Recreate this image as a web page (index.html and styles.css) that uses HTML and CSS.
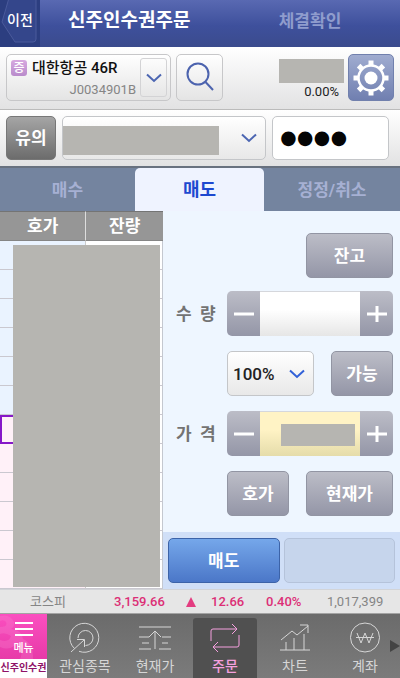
FILE: index.html
```
<!DOCTYPE html>
<html lang="ko">
<head>
<meta charset="utf-8">
<meta name="viewport" content="width=device-width, initial-scale=1">
<title>신주인수권주문</title>
<link rel="stylesheet" href="styles.css">
</head>
<body>
<div class="app">
  <header class="topbar">
    <a class="back" href="#">
      <svg class="back-shape" viewBox="0 0 40 47" preserveAspectRatio="none" aria-hidden="true"><path d="M0 0H40V47H0Z" fill="#2c3e80"/><path d="M9 -2H36V39Q36 42 33 42H15L2 22Z" fill="#34468b" stroke="#4a5a9b"/></svg>
      <span>이전</span>
    </a>
    <h1>신주인수권주문</h1>
    <a class="confirm" href="#">체결확인</a>
  </header>

  <section class="strip stock-strip">
    <button class="stock" type="button">
      <span class="stock-text">
        <span class="stock-name"><span class="tag">증</span>대한항공 46R</span>
        <span class="stock-code">J0034901B</span>
      </span>
      <span class="stock-arrow"><svg class="chevron" viewBox="0 0 16 10" aria-hidden="true"><path d="M1 1.5 8 8 15 1.5"/></svg></span>
    </button>
    <button class="search" type="button" aria-label="검색">
      <svg viewBox="0 0 32 32" aria-hidden="true"><circle cx="14" cy="12" r="10.5"/><path d="M21.5 20 29 28"/></svg>
    </button>
    <div class="price"><span class="mask price-mask"></span><span class="rate">0.00%</span></div>
    <button class="settings" type="button" aria-label="설정">
      <svg viewBox="-18 -18 36 36" aria-hidden="true">
        <g fill="#fff"><path id="tooth" d="M-2.5 -17.5H2.5V-12H-2.5Z"/><use href="#tooth" transform="rotate(45)"/><use href="#tooth" transform="rotate(90)"/><use href="#tooth" transform="rotate(135)"/><use href="#tooth" transform="rotate(180)"/><use href="#tooth" transform="rotate(225)"/><use href="#tooth" transform="rotate(270)"/><use href="#tooth" transform="rotate(315)"/></g>
        <circle r="12.5" fill="none" stroke="#fff" stroke-width="2.5"/><circle r="6.5" fill="#fff"/>
      </svg>
    </button>
  </section>

  <section class="strip account-strip">
    <button class="notice" type="button">유의</button>
    <div class="select-box account">
      <select aria-label="계좌번호"><option></option></select>
      <span class="mask account-mask"></span>
      <svg class="chevron" viewBox="0 0 16 10" aria-hidden="true"><path d="M1 1.5 8 8 15 1.5"/></svg>
    </div>
    <input class="password" type="password" value="0000" aria-label="비밀번호">
  </section>

  <nav class="tabs">
    <a href="#">매수</a>
    <a class="on" href="#">매도</a>
    <a href="#">정정/취소</a>
  </nav>

  <main class="body">
    <div class="book">
      <table>
        <thead><tr><th>호가</th><th>잔량</th></tr></thead>
        <tbody>
          <tr class="ask"><td></td><td></td></tr>
          <tr class="ask"><td></td><td></td></tr>
          <tr class="ask"><td></td><td></td></tr>
          <tr class="ask"><td></td><td></td></tr>
          <tr class="ask"><td></td><td></td></tr>
          <tr class="ask"><td></td><td></td></tr>
          <tr class="bid now"><td></td><td></td></tr>
          <tr class="bid"><td></td><td></td></tr>
          <tr class="bid"><td></td><td></td></tr>
          <tr class="bid"><td></td><td></td></tr>
          <tr class="bid"><td></td><td></td></tr>
          <tr class="bid"><td></td><td></td></tr>
        </tbody>
      </table>
      <span class="mask book-mask"></span>
    </div>

    <form class="order">
      <div class="fields">
        <div class="balance"><button class="btn wide" type="button">잔고</button></div>
        <div class="field">
          <label for="qty">수&nbsp; 량</label>
          <div class="stepper">
            <button type="button" aria-label="수량 감소"><svg viewBox="0 0 20 20" aria-hidden="true"><path d="M0 10H20"/></svg></button>
            <input id="qty" type="text">
            <button type="button" aria-label="수량 증가"><svg viewBox="0 0 20 20" aria-hidden="true"><path d="M0 10H20M10 2V18"/></svg></button>
          </div>
        </div>
        <div class="field">
          <span></span>
          <div class="pair">
            <div class="select-box percent">
              <select aria-label="비율"><option>100%</option></select>
              <svg class="chevron" viewBox="0 0 16 10" aria-hidden="true"><path d="M1 1.5 8 8 15 1.5"/></svg>
            </div>
            <button class="btn narrow" type="button">가능</button>
          </div>
        </div>
        <div class="field">
          <label for="price">가&nbsp; 격</label>
          <div class="stepper yellow">
            <button type="button" aria-label="가격 감소"><svg viewBox="0 0 20 20" aria-hidden="true"><path d="M0 10H20"/></svg></button>
            <input id="price" type="text">
            <span class="mask input-mask"></span>
            <button type="button" aria-label="가격 증가"><svg viewBox="0 0 20 20" aria-hidden="true"><path d="M0 10H20M10 2V18"/></svg></button>
          </div>
        </div>
        <div class="field">
          <span></span>
          <div class="pair">
            <button class="btn narrow" type="button">호가</button>
            <button class="btn wide" type="button">현재가</button>
          </div>
        </div>
      </div>
      <div class="actions">
        <button class="submit" type="submit">매도</button>
        <button class="blank" type="button" disabled aria-label="사용 안 함"></button>
      </div>
    </form>
  </main>

  <section class="ticker">
    <span class="dim">코스피</span>
    <span>3,159.66</span>
    <svg viewBox="0 0 10 10" aria-hidden="true"><path d="M5 0 10 10H0Z"/></svg>
    <span>12.66</span>
    <span>0.40%</span>
    <span class="dim volume">1,017,399</span>
  </section>

  <nav class="dock">
    <a class="menu" href="#">
      <span class="menu-top">
        <svg class="swirl" viewBox="0 0 47 45" preserveAspectRatio="none" aria-hidden="true"><path d="M0 2Q8 0 12 5Q17 11 11 15Q22 16 23 25Q34 29 33 45H20Q25 34 15 31Q9 37 0 33V26Q9 29 11 22Q5 18 0 20V13Q8 13 6 8Q4 5 0 7Z"/></svg>
        <svg class="bars" viewBox="0 0 18 14" aria-hidden="true"><path d="M0 1H18M0 7H18M0 13H18"/></svg>
        <span>메뉴</span>
      </span>
      <span class="menu-bottom">신주인수권</span>
    </a>
    <a class="item" href="#">
      <svg viewBox="0 0 34 32" aria-hidden="true"><path d="M6.5 26.5A14.5 14.5 0 1 1 11 29.3M10 16A7.5 7.5 0 1 1 17.5 23.5M3 30 16 18M9 17.5H16.5V25"/></svg>
      <span>관심종목</span>
    </a>
    <a class="item" href="#">
      <svg viewBox="0 0 34 32" aria-hidden="true"><path d="M1 5H33M1 15H11M24 15H33M4 21H11M24 21H30M1 27H13M21 27H33M17 27V9M11 15 17 9 23 15"/></svg>
      <span>현재가</span>
    </a>
    <a class="item on" href="#">
      <svg viewBox="0 0 34 32" aria-hidden="true"><path d="M3 19V9Q3 7 5 7H29M24 2 29 7 24 12M31 13V23Q31 25 29 25H5M10 20 5 25 10 30"/></svg>
      <span>주문</span>
    </a>
    <a class="item" href="#">
      <svg viewBox="0 0 34 32" aria-hidden="true"><path d="M2 28H32M8 28V20M16 28V16M26 28V12M3 18 14 9 19 13 30 4M22 3H30V11"/></svg>
      <span>차트</span>
    </a>
    <a class="item" href="#">
      <svg viewBox="0 0 34 32" aria-hidden="true"><circle cx="17" cy="15.5" r="14.5"/><path d="M9 11 13 21 17 11 21 21 25 11M8 15.5H26"/></svg>
      <span>계좌</span>
    </a>
    <span class="more"></span>
  </nav>
</div>
</body>
</html>
```
FILE: styles.css
```
* { box-sizing: border-box; }

body {
  margin: 0;
  font-family: Roboto, "Noto Sans CJK KR", sans-serif;
  font-size: 17px;
  line-height: 20px;
  color: #222;
  background: #eef6ff;
}

button, input, select {
  font: inherit;
  color: inherit;
  margin: 0;
  padding: 0;
  border: 0;
  min-width: 0;
}

a { color: inherit; text-decoration: none; }

.app { display: flex; flex-direction: column; min-height: 100vh; }

.mask { display: block; background: #b6b5b1; }

.chevron {
  width: 16px;
  height: 10px;
  fill: none;
  stroke: #4c66b2;
  stroke-width: 2;
}

/* Title bar */
.topbar {
  display: grid;
  grid-template-columns: 40px 4fr 5fr;
  align-items: center;
  height: 47px;
  padding-bottom: 6px;
  color: #fff;
  background: linear-gradient(#5969b2, #3e509c 55%, #3b4b8d);
}

.back {
  position: relative;
  display: flex;
  align-items: center;
  justify-content: center;
  height: 47px;
  padding-bottom: 8px;
  font-size: 14px;
  font-weight: 500;
  margin-bottom: -6px;
}

.back-shape { position: absolute; inset: 0; width: 100%; height: 100%; }
.back span { position: relative; }

.topbar h1 {
  margin: 0;
  padding-left: 28px;
  font-size: 19px;
  font-weight: 700;
  white-space: nowrap;
}

.confirm {
  justify-self: center;
  padding-left: 20px;
  font-weight: 700;
  color: #8f9ccd;
}

/* Control strips */
.strip {
  display: flex;
  background: linear-gradient(#fff, #e2e2e3);
}

.stock-strip {
  gap: 5px;
  height: 63px;
  padding: 7px 6px 8px;
  border-bottom: 1px solid #bbb;
}

.stock, .search {
  border: 1px solid #c7c7c9;
  border-radius: 5px;
  background: linear-gradient(#fff, #e4e4e4);
}

.stock {
  display: flex;
  flex: 0 1 165px;
  padding: 3px;
  text-align: left;
}

.stock-text { display: flex; flex: 1; flex-direction: column; gap: 2px; }

.stock-name {
  display: flex;
  align-items: center;
  gap: 5px;
  font-size: 15px;
  font-weight: 500;
  color: #111;
  padding-left: 1px;
  white-space: nowrap;
}

.tag {
  width: 16px;
  height: 16px;
  border-radius: 3px;
  font-size: 12px;
  line-height: 16px;
  text-align: center;
  color: #fff;
  background: linear-gradient(#d7a9e0, #b98bcb);
}

.stock-code {
  padding-right: 4px;
  text-align: right;
  font-size: 13px;
  color: #858585;
}

.stock-arrow {
  display: flex;
  align-items: center;
  justify-content: center;
  width: 27px;
  border: 1px solid #d3d3d5;
  border-radius: 3px;
}

.search { width: 47px; }
.search svg { display: block; width: 32px; height: 32px; margin: 0 auto; fill: none; stroke: #4c63ae; stroke-width: 2; }

.price {
  display: flex;
  flex: 1;
  flex-direction: column;
  align-items: flex-end;
  padding-top: 5px;
}
.price-mask { width: 65px; height: 24px; margin-right: -1px; }
.rate { padding-right: 4px; font-size: 13px; line-height: 18px; }

.settings {
  width: 46px;
  border: 1px solid #7180ad;
  border-radius: 5px;
  background: linear-gradient(#a0acd0, #707fb0);
}
.settings svg { display: block; width: 36px; height: 36px; margin: 0 auto; }

.account-strip {
  gap: 6px;
  height: 58px;
  padding: 6px 11px 6px 6px;
  border-bottom: 2px solid #68717f;
}

.notice {
  width: 50px;
  border: 1px solid #777;
  border-radius: 5px;
  font-weight: 700;
  color: #fff;
  background: linear-gradient(#a5a5a5, #6c6c6c);
}

.select-box {
  position: relative;
  display: flex;
  align-items: center;
  border: 1px solid #c4c6c9;
  border-radius: 5px;
  background: linear-gradient(#fff, #e8e8e8);
}

.select-box select {
  width: 100%;
  height: 100%;
  appearance: none;
  background: transparent;
}

.select-box .chevron { position: absolute; right: 8px; pointer-events: none; }

.account { flex: 1; }
.account-mask { position: absolute; left: 0; right: 46px; top: 9px; bottom: 4px; pointer-events: none; }

/* The stroke thickens the bullets */
.password {
  width: 117px;
  padding-left: 7px;
  border: 1px solid #c4c6c9;
  border-radius: 5px;
  font-family: "Liberation Serif", serif;
  font-size: 48px;
  line-height: 42px;
  color: #050505;
  background: #fff;
  -webkit-text-stroke: 3px #050505;
}

/* Order type tabs */
.tabs {
  display: grid;
  grid-template-columns: 135fr 129fr 136fr;
  height: 43px;
  background: #74849f;
}

.tabs a {
  display: flex;
  align-items: center;
  justify-content: center;
  font-size: 17px;
  font-weight: 700;
  color: #a6b0d3;
}

.tabs .on {
  font-size: 18px;
  font-weight: 700;
  color: #1d48d0;
  background: #eff3ff;
  border-radius: 5px 5px 0 0;
}

/* Quote table */
.body { display: flex; flex: 1; }

.book {
  position: relative;
  flex: 163;
  background: #fff;
}

.book table { width: 100%; border-collapse: separate; border-spacing: 0; table-layout: fixed; }

.book th {
  height: 30px;
  padding: 0;
  border-top: 1px solid #747474;
  border-bottom: 1px solid #858585;
  font-weight: 700;
  color: #fff;
  background: #969696;
}
.book th:first-child { width: 53%; border-right: 1px solid #ddd; }

.book td { height: 29px; padding: 0; border-bottom: 1px solid #cac8d0; }
.book td:first-child { border-right: 1px solid #ccc; }
.book td:last-child { border-right: 1px solid #c4c8d0; }
.ask td:first-child { background: #eaf3ff; }
.bid td:first-child { background: #fff1f8; }
.book .now td:first-child { border: 2px solid #8617c8; }

.book-mask { position: absolute; left: 13px; right: 3px; top: 34px; bottom: 2px; }

/* Order form */
.order {
  display: flex;
  flex: 237;
  flex-direction: column;
  justify-content: space-between;
  background: #eef6ff;
}

.fields { display: flex; flex-direction: column; gap: 15px; padding: 22px 7px 0 13px; }

.balance { display: flex; justify-content: flex-end; height: 43px; }

.field {
  display: grid;
  grid-template-columns: 51px 1fr;
  align-items: center;
  height: 45px;
}

.field label { font-weight: 700; color: #737373; white-space: nowrap; }

.pair { display: flex; justify-content: space-between; height: 45px; }

.btn {
  height: 45px;
  border: 1px solid #9295a3;
  border-radius: 5px;
  font-weight: 700;
  color: #fff;
  background: linear-gradient(#bcbdc7, #9496a7);
}
.wide { width: 87px; }
.narrow { width: 62px; }

.percent { width: 87px; }
.percent select { padding-left: 5px; font-weight: 500; }
.percent .chevron { stroke: #3161d8; }

.stepper {
  position: relative;
  display: flex;
  height: 45px;
  border-radius: 5px;
  overflow: hidden;
}

.stepper button { flex: 0 0 33px; background: linear-gradient(#bcbdc7, #9496a7); }
.stepper svg { display: block; width: 20px; height: 20px; margin: 0 auto; stroke: #fff; stroke-width: 3; }

.stepper input {
  flex: 1;
  width: 0;
  border-top: 1px solid #d5d7dc;
  background: linear-gradient(#fff 40%, #e6e6e6);
}
.yellow input { background: linear-gradient(#fff3c5 40%, #e5dcaa); }
.input-mask { position: absolute; left: 54px; right: 38px; top: 13px; bottom: 10px; pointer-events: none; }

.actions {
  display: grid;
  grid-template-columns: 1fr 1fr;
  gap: 4px;
  padding: 6px 5px;
  background: #d0dff7;
}

.submit, .blank { height: 45px; border-radius: 5px; }
.submit {
  border: 1px solid #3c63a8;
  font-weight: 700;
  color: #fff;
  background: linear-gradient(#75a7ea, #4b77c8);
}
.blank { border: 1px solid #b5c3da; background: #c6d5ec; }

/* Index ticker */
.ticker {
  display: grid;
  grid-template-columns: 84fr 72fr 25fr 55fr 61fr 73fr;
  align-items: center;
  height: 25px;
  padding-left: 30px;
  border-top: 1px solid #d2d4d8;
  border-bottom: 1px solid #a3a3a3;
  font-size: 13px;
  font-weight: 500;
  color: #dc2f76;
  background: #e6e6e6;
}
.ticker svg { width: 10px; height: 10px; fill: #e33c80; }
.ticker .dim { font-weight: 400; color: #858585; }

/* Bottom dock */
.dock {
  position: relative;
  display: grid;
  grid-template-columns: 50px repeat(5, 1fr);
  height: 64px;
  background: linear-gradient(#6b6b6b, #7b7b7b);
}

.menu { display: flex; flex-direction: column; margin-right: 3px; color: #fff; }

.menu-top {
  position: relative;
  display: flex;
  flex: 1;
  flex-direction: column;
  align-items: center;
  justify-content: flex-end;
  gap: 3px;
  font-size: 11px;
  font-weight: 500;
  background: linear-gradient(#fb4fc0, #e73aa8);
}
.menu-top > span { position: relative; }
.swirl { position: absolute; inset: 0; width: 100%; height: 100%; fill: #f883d0; opacity: 0.3; }
.bars { position: relative; width: 18px; height: 14px; stroke: #fff; stroke-width: 2; }

.menu-bottom {
  height: 19px;
  font-size: 10px;
  font-weight: 700;
  line-height: 18px;
  text-align: center;
  white-space: nowrap;
  color: #8f1267;
  background: #fff;
}

.item {
  display: flex;
  flex-direction: column;
  align-items: center;
  gap: 3px;
  margin: 4px 3px 0;
  padding-top: 4px;
  font-size: 14px;
  line-height: 18px;
  color: #d6d6d6;
  white-space: nowrap;
}
.item svg { width: 34px; height: 32px; fill: none; stroke: currentColor; stroke-width: 1; }

.item.on {
  border-radius: 3px 3px 0 0;
  font-weight: 500;
  color: #f5a0de;
  background: #505050;
}

.more {
  position: absolute;
  right: 0;
  top: 26px;
  border: solid transparent;
  border-width: 6px 0 6px 10px;
  border-left-color: #444;
}
```
